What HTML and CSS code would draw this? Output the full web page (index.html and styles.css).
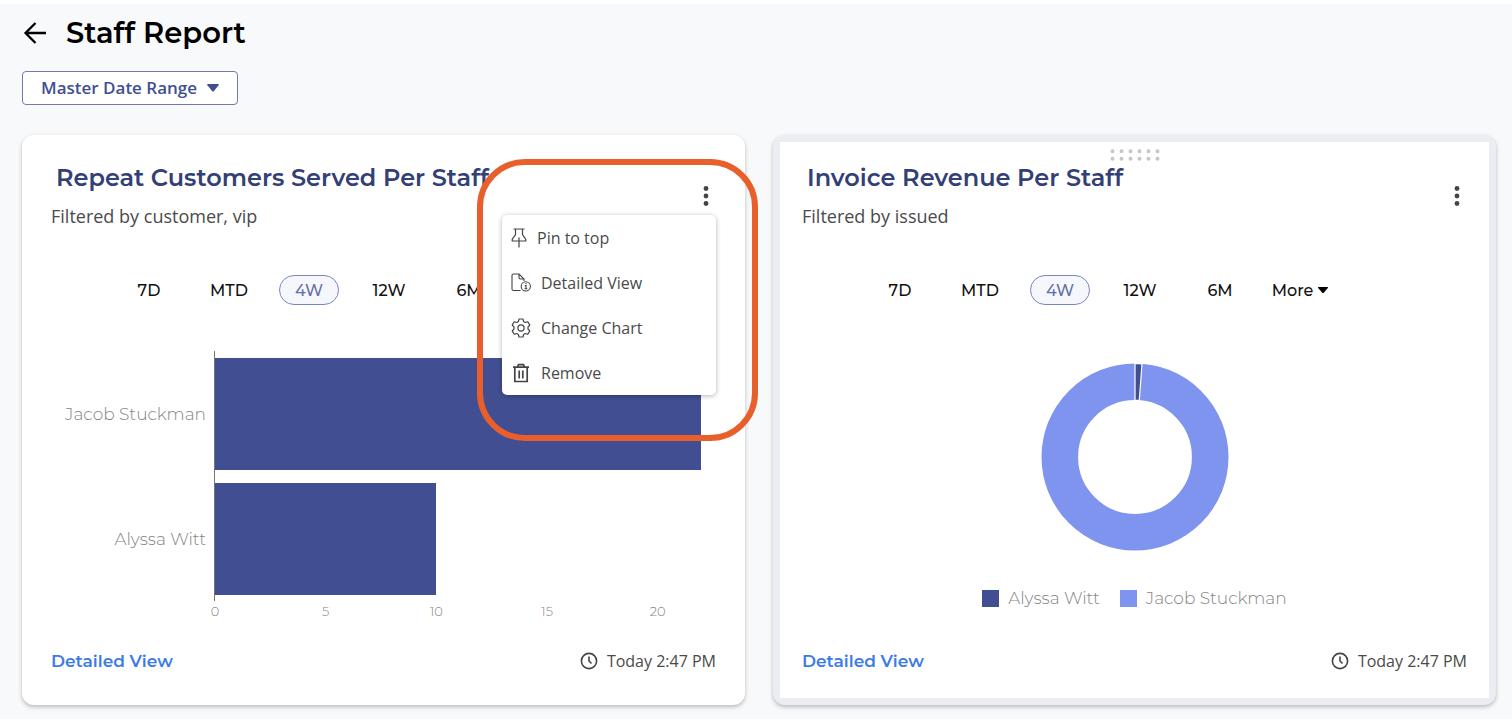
FILE: index.html
```html
<!DOCTYPE html>
<html lang="en">
<head>
    <meta charset="UTF-8">
    <meta name="viewport" content="width=device-width, initial-scale=1.0">
    <title>Staff Report</title>
    <link rel="stylesheet" href="styles.css">
</head>
<body>

    <main class="page">
        <header class="page-header">
            <a class="back" href="#" aria-label="Back">
                <svg width="24" height="24" viewBox="0 0 24 24" fill="none" stroke="#000" stroke-width="2.300">
                    <path d="M24 12H3.500M13.500 2L3.500 12l10 10"/>
                </svg>
            </a>
            <h1>Staff Report</h1>
        </header>

        <button type="button" class="date-range">
            Master Date Range
            <svg width="12" height="8" viewBox="0 0 12 8" fill="currentColor"><path d="M1 0h10q1.500 0 .6 1.200L7 7q-1 1-2 0L.4 1.200Q-.5 0 1 0z"/></svg>
        </button>

        <div class="cards">
            <section class="card">
                <div class="card-body">
                    <div class="card-header">
                        <div>
                            <h2>Repeat Customers Served Per Staff</h2>
                            <p class="filter">Filtered by customer, vip</p>
                        </div>
                        <button type="button" class="kebab" aria-label="Card options">
                            <svg width="6" height="20" viewBox="0 0 6 20" fill="#444"><circle cx="3" cy="2.500" r="2.400"/><circle cx="3" cy="10" r="2.400"/><circle cx="3" cy="17.500" r="2.400"/></svg>
                        </button>
                    </div>

                    <div class="ranges">
                        <button type="button">7D</button>
                        <button type="button">MTD</button>
                        <button type="button" class="active">4W</button>
                        <button type="button">12W</button>
                        <button type="button">6M</button>
                        <button type="button" class="more">More <svg width="10" height="6" viewBox="0 0 10 6"><path d="M.5 0h9q.8.3.3 1L6 5.400q-1 1-2 0L.2 1Q-.3.3.5 0z"/></svg></button>
                    </div>

                    <div class="chart bar-chart">
                        <div class="labels">
                            <span>Jacob Stuckman</span>
                            <span>Alyssa Witt</span>
                        </div>
                        <div class="plot">
                            <div class="bar" style="width: 100%"></div>
                            <div class="bar" style="width: 45.45%"></div>
                        </div>
                        <div class="ticks">
                            <span>0</span>
                            <span>5</span>
                            <span>10</span>
                            <span>15</span>
                            <span>20</span>
                        </div>
                    </div>

                    <div class="card-footer">
                        <a href="#">Detailed View</a>
                        <span class="updated">
                            <svg width="18" height="18" viewBox="0 0 18 18" fill="none" stroke="#444" stroke-width="1.600"><circle cx="9" cy="9" r="7.600"/><path d="M9 4.500V9l2.500 2.500"/></svg>
                            Today 2:47 PM
                        </span>
                    </div>
                </div>

                <div class="menu">
                    <button type="button">
                        <svg width="16" height="20" viewBox="0 0 16 20" fill="none" stroke="#444" stroke-width="1.200"><path d="M2.500 1h11M4.500 1v5.500L1.200 11.500v1.500h13.600v-1.500L11.500 6.500V1M8 9.500V19.500"/></svg>
                        Pin to top
                    </button>
                    <button type="button">
                        <svg width="20" height="20" viewBox="0 0 20 20" fill="none" stroke="#444" stroke-width="1.100"><path d="M9.500 17.500H2.500q-1.500 0-1.500-1.500V2.500Q1 1 2.500 1H8l5 5v2M8 1v3.500Q8 6 9.500 6H13"/><circle cx="14.800" cy="13.400" r="4.600"/><path d="M13.800 12.600h1.200v3M13.500 15.700h2.800M14.500 10.600h1"/></svg>
                        Detailed View
                    </button>
                    <button type="button">
                        <svg width="20" height="20" viewBox="0 0 20 20" fill="none" stroke="#444" stroke-width="1.200" stroke-linejoin="round"><path d="M8 1h4l.6 2.600 1.600.9L16.800 3.700l2 3.400L17 9v2l1.800 1.900-2 3.400-2.600-.8-1.600.9L12 19H8l-.6-2.600-1.600-.9-2.600.8-2-3.400L3 11V9L1.200 7.100l2-3.400 2.600.8 1.600-.9z"/><circle cx="10" cy="10" r="3.100"/></svg>
                        Change Chart
                    </button>
                    <button type="button">
                        <svg width="20" height="20" viewBox="0 0 20 20" fill="none" stroke="#444" stroke-width="1.700"><path d="M2 4.200h16M3.800 4.200V18.500h12.400V4.200M6.500 4L7.500 1.600h5L13.500 4M8.200 7.500v8M11.800 7.500v8"/></svg>
                        Remove
                    </button>
                </div>
                <div class="highlight"></div>
            </section>

            <section class="card dragging">
                <div class="card-body">
                    <svg class="drag-handle" width="50" height="12" viewBox="0 0 50 12" fill="none" stroke="#c6c6c6" stroke-width="4" stroke-linecap="round" stroke-dasharray="0 9">
                        <path d="M2.500 2.300h46M2.500 9.700h46"/>
                    </svg>
                    <div class="card-header">
                        <div>
                            <h2>Invoice Revenue Per Staff</h2>
                            <p class="filter">Filtered by issued</p>
                        </div>
                        <button type="button" class="kebab" aria-label="Card options">
                            <svg width="6" height="20" viewBox="0 0 6 20" fill="#444"><circle cx="3" cy="2.500" r="2.400"/><circle cx="3" cy="10" r="2.400"/><circle cx="3" cy="17.500" r="2.400"/></svg>
                        </button>
                    </div>

                    <div class="ranges">
                        <button type="button">7D</button>
                        <button type="button">MTD</button>
                        <button type="button" class="active">4W</button>
                        <button type="button">12W</button>
                        <button type="button">6M</button>
                        <button type="button" class="more">More <svg width="10" height="6" viewBox="0 0 10 6"><path d="M.5 0h9q.8.3.3 1L6 5.400q-1 1-2 0L.2 1Q-.3.3.5 0z"/></svg></button>
                    </div>

                    <div class="chart donut-chart">
                        <svg width="188" height="188" viewBox="-94 -94 188 188">
                            <circle r="75.200" fill="none" stroke="#7f94ef" stroke-width="36.600"/>
                            <path d="M0-93.500A93.500 93.500 0 0 1 7-93.200L4.300-56.700A57 57 0 0 0 0-56.900z" fill="#414f92" stroke="#fff" stroke-width="1.200"/>
                        </svg>
                        <div class="legend">
                            <span><i class="swatch dark"></i>Alyssa Witt</span>
                            <span><i class="swatch light"></i>Jacob Stuckman</span>
                        </div>
                    </div>

                    <div class="card-footer">
                        <a href="#">Detailed View</a>
                        <span class="updated">
                            <svg width="18" height="18" viewBox="0 0 18 18" fill="none" stroke="#444" stroke-width="1.600"><circle cx="9" cy="9" r="7.600"/><path d="M9 4.500V9l2.500 2.500"/></svg>
                            Today 2:47 PM
                        </span>
                    </div>
                </div>
            </section>
        </div>
    </main>

</body>
</html>
```
FILE: styles.css
```css
:root {
    --indigo: #414f92;
    --navy: #334075;
    --periwinkle: #7f94ef;
    --link: #3c7be8;
    --text: #4a4a4a;
    --muted: #858585;
    --heading-font: Montserrat, Inter, sans-serif;
    --body-font: "Open Sans", sans-serif;
}

* {
    margin: 0;
    padding: 0;
    box-sizing: border-box;
}

body {
    background-color: #fff;
    color: var(--text);
    font-family: var(--body-font);
    font-size: 16px;
}

button {
    border: none;
    background: none;
    font: inherit;
    color: inherit;
    cursor: pointer;
}

svg {
    display: block;
    flex: none;
}

.page {
    margin: 4px 0 7px;
    padding: 8px 16px 14px 22px;
    background-color: #f8f9fb;
}

.page-header {
    display: flex;
    align-items: center;
    gap: 20px;
    height: 42px;
    margin-bottom: 17px;
}

h1 {
    font-family: var(--heading-font);
    font-size: 29px;
    font-weight: 600;
    line-height: 40px;
    color: #000;
}

.date-range {
    display: flex;
    align-items: center;
    gap: 10px;
    height: 34px;
    margin-bottom: 30px;
    padding: 0 18px;
    border: 1px solid #6f7ab0;
    border-radius: 4px;
    background-color: #fff;
    color: var(--indigo);
    font-size: 17px;
    font-weight: 600;
    line-height: 30px;
}

.cards {
    display: grid;
    grid-template-columns: 1fr 1fr;
    gap: 28px;
}

.card {
    position: relative;
    padding: 7px;
    border-radius: 12px;
    background-color: #fff;
    box-shadow: 0 2px 4px rgba(0, 0, 0, 0.25);
}

.card.dragging {
    background-color: #ebedf2;
}

.card-body {
    position: relative;
    padding: 21px 22px 23px;
    background-color: #fff;
}

.drag-handle {
    position: absolute;
    top: 7px;
    left: calc(50% - 25px);
}

.card-header {
    display: flex;
    justify-content: space-between;
    align-items: center;
    margin-bottom: 46px;
}

h2 {
    margin: 0 0 10px 5px;
    font-family: var(--heading-font);
    font-size: 24px;
    font-weight: 600;
    line-height: 30px;
    color: var(--navy);
}

.filter {
    font-size: 18px;
    line-height: 26px;
}

.kebab {
    display: flex;
    justify-content: center;
    width: 20px;
}

.ranges {
    display: grid;
    grid-template-columns: repeat(6, 80px);
    justify-items: center;
    margin: 0 0 46px 58px;
    font-family: var(--heading-font);
    font-size: 16px;
    font-weight: 500;
    color: #111;
}

.ranges button {
    height: 30px;
    padding: 0 15px;
    border-radius: 15px;
}

.ranges .active {
    border: 1px solid #7c87bb;
    background-color: #f5f7fd;
    color: #6470a8;
}

.ranges .more {
    display: flex;
    align-items: center;
    gap: 5px;
    padding: 0;
}

.chart {
    height: 270px;
    margin-bottom: 26px;
    font-family: var(--heading-font);
    font-size: 17px;
    font-weight: 300;
    color: var(--muted);
}

.bar-chart {
    display: grid;
    grid-template-columns: 155px 1fr;
    grid-template-rows: 250px 20px;
    column-gap: 8px;
    padding-right: 15px;
}

.labels,
.plot {
    display: grid;
    grid-template-rows: 1fr 1fr;
    gap: 13px;
    padding: 7px 0 6px;
}

.labels {
    align-items: center;
    text-align: right;
}

.plot {
    border-left: 1px solid #777;
}

.bar {
    background-color: var(--indigo);
}

/* one cell per 5 units on a 22 unit scale, pulled left so 0 sits on the axis */
.ticks {
    grid-column: 2;
    display: grid;
    grid-template-columns: repeat(5, calc(100% * 5 / 22));
    margin-left: calc(-100% * 2.5 / 22 + 1px);
    width: 100%;
    font-size: 13px;
    line-height: 20px;
    text-align: center;
}

.donut-chart {
    display: flex;
    flex-direction: column;
    align-items: center;
    gap: 35px;
    padding-top: 12px;
}

.legend {
    display: flex;
    gap: 20px;
    line-height: 24px;
}

.legend span {
    display: flex;
    align-items: center;
    gap: 9px;
}

.swatch {
    width: 17px;
    height: 17px;
}

.swatch.dark {
    background-color: var(--indigo);
}

.swatch.light {
    background-color: var(--periwinkle);
}

.card-footer {
    display: flex;
    justify-content: space-between;
    align-items: center;
    height: 28px;
}

.card-footer a {
    font-family: var(--heading-font);
    font-size: 17px;
    font-weight: 600;
    color: var(--link);
    text-decoration: none;
}

.updated {
    display: flex;
    align-items: center;
    gap: 9px;
}

.menu {
    position: absolute;
    top: 80px;
    right: 29px;
    width: 214px;
    border-radius: 5px;
    background-color: #fff;
    box-shadow: 0 1px 5px rgba(0, 0, 0, 0.3);
}

.menu button {
    display: flex;
    align-items: center;
    gap: 10px;
    width: 100%;
    height: 45px;
    padding: 0 9px;
}

.highlight {
    position: absolute;
    top: 24px;
    right: -13px;
    width: 281px;
    height: 282px;
    border: 6px solid #e95f2c;
    border-radius: 48px;
    pointer-events: none;
}
```
